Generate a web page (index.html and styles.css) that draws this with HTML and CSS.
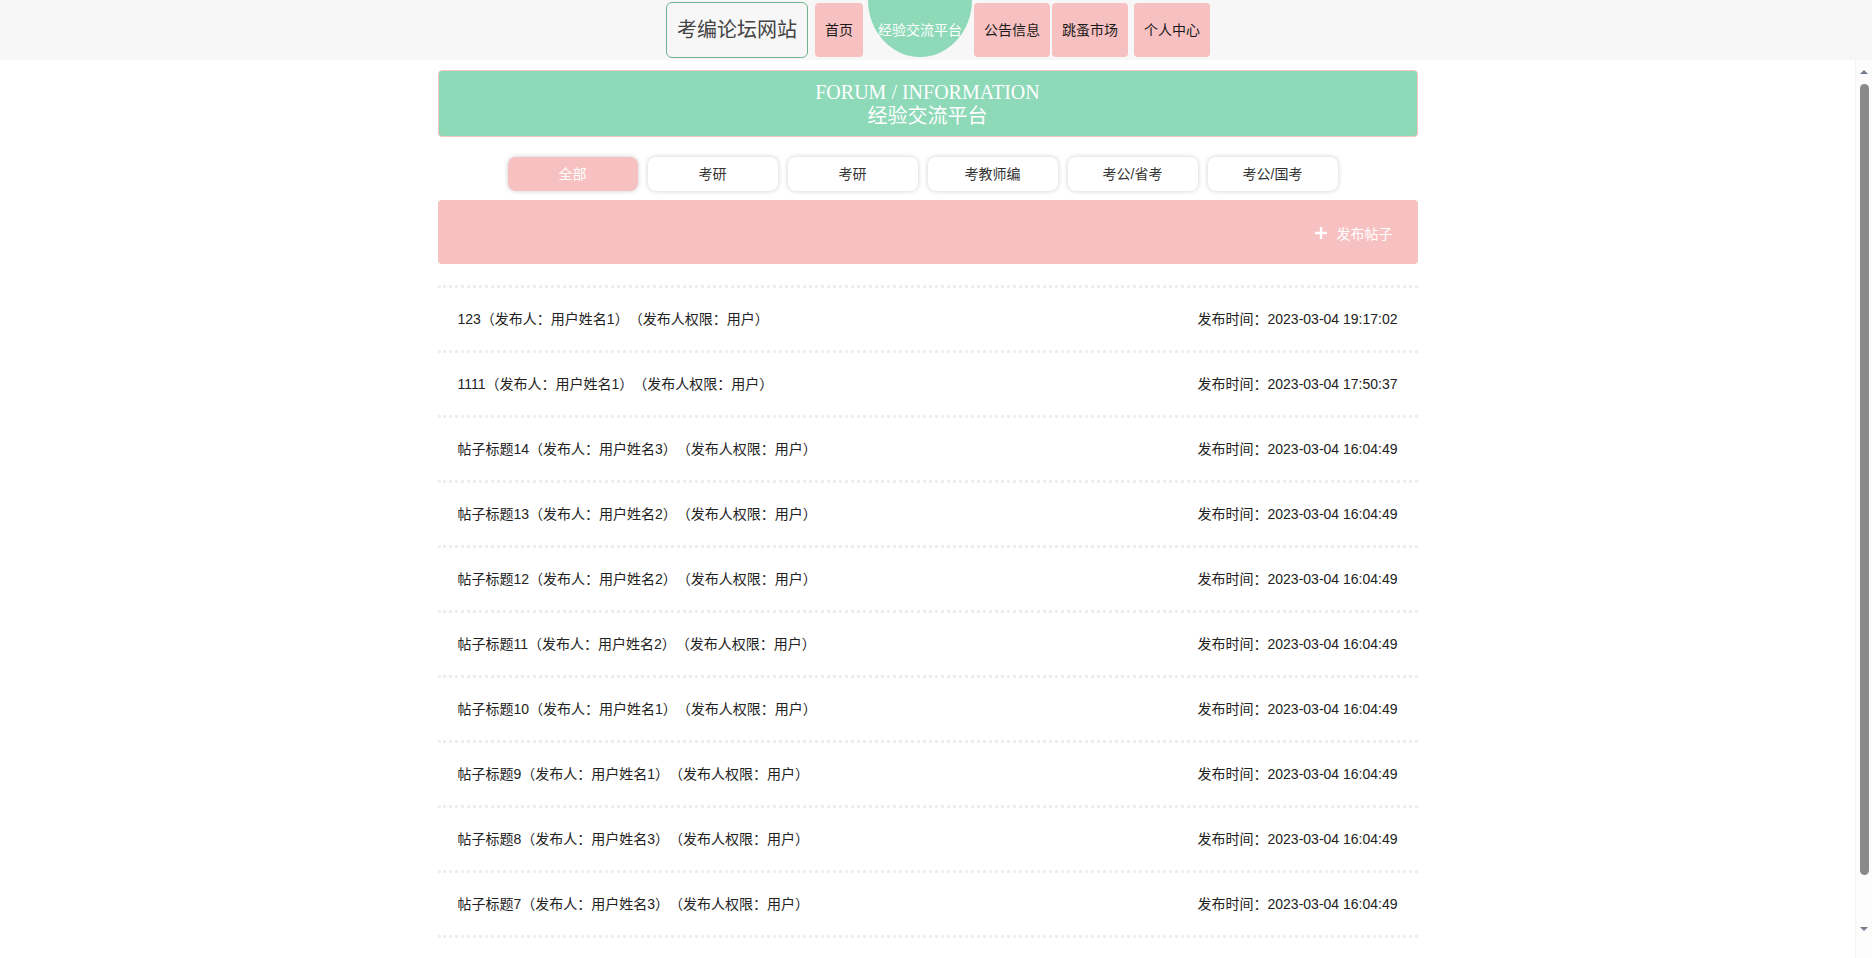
FILE: index.html
```html
<!DOCTYPE html>
<html lang="zh-CN">
<head>
<meta charset="utf-8">
<title>经验交流平台</title>
<link rel="stylesheet" href="styles.css">
</head>
<body>
<div class="page">
  <header class="topbar">
    <nav class="nav">
      <div class="logo">考编论坛网站</div>
      <a class="nav-item nav-home">首页</a>
      <a class="nav-item nav-active">经验交流平台</a>
      <a class="nav-item">公告信息</a>
      <a class="nav-item nav-market">跳蚤市场</a>
      <a class="nav-item">个人中心</a>
    </nav>
  </header>
  <div class="body-row">
    <main class="main">
      <div class="container">
        <div class="banner">
          <div class="banner-en">FORUM / INFORMATION</div>
          <div class="banner-cn">经验交流平台</div>
        </div>
        <div class="tabs">
          <div class="tab tab-active">全部</div>
          <div class="tab">考研</div>
          <div class="tab">考研</div>
          <div class="tab">考教师编</div>
          <div class="tab">考公/省考</div>
          <div class="tab">考公/国考</div>
        </div>
        <div class="action-bar">
          <div class="publish">
            <svg class="plus" width="12" height="12" viewBox="0 0 12 12"><rect x="4.8" y="0" width="2.4" height="12" fill="#fff"/><rect x="0" y="4.8" width="12" height="2.4" fill="#fff"/></svg>
            <span>发布帖子</span>
          </div>
        </div>
        <ul class="list">
          <li class="row"><span class="title">123（发布人：用户姓名1）（发布人权限：用户）</span><span class="time">发布时间：2023-03-04 19:17:02</span></li>
          <li class="row"><span class="title">1111（发布人：用户姓名1）（发布人权限：用户）</span><span class="time">发布时间：2023-03-04 17:50:37</span></li>
          <li class="row"><span class="title">帖子标题14（发布人：用户姓名3）（发布人权限：用户）</span><span class="time">发布时间：2023-03-04 16:04:49</span></li>
          <li class="row"><span class="title">帖子标题13（发布人：用户姓名2）（发布人权限：用户）</span><span class="time">发布时间：2023-03-04 16:04:49</span></li>
          <li class="row"><span class="title">帖子标题12（发布人：用户姓名2）（发布人权限：用户）</span><span class="time">发布时间：2023-03-04 16:04:49</span></li>
          <li class="row"><span class="title">帖子标题11（发布人：用户姓名2）（发布人权限：用户）</span><span class="time">发布时间：2023-03-04 16:04:49</span></li>
          <li class="row"><span class="title">帖子标题10（发布人：用户姓名1）（发布人权限：用户）</span><span class="time">发布时间：2023-03-04 16:04:49</span></li>
          <li class="row"><span class="title">帖子标题9（发布人：用户姓名1）（发布人权限：用户）</span><span class="time">发布时间：2023-03-04 16:04:49</span></li>
          <li class="row"><span class="title">帖子标题8（发布人：用户姓名3）（发布人权限：用户）</span><span class="time">发布时间：2023-03-04 16:04:49</span></li>
          <li class="row"><span class="title">帖子标题7（发布人：用户姓名3）（发布人权限：用户）</span><span class="time">发布时间：2023-03-04 16:04:49</span></li>
        </ul>
      </div>
    </main>
    <div class="rail" aria-hidden="true">
      <span class="arrow arrow-up"></span>
      <span class="thumb"></span>
      <span class="arrow arrow-down"></span>
    </div>
  </div>
</div>
</body>
</html>
```
FILE: styles.css
```css
* { box-sizing: border-box; }
html, body { margin: 0; padding: 0; height: 100%; }
body {
  font-family: "Liberation Sans", "Noto Sans CJK SC", sans-serif;
  font-size: 14px;
  color: #333;
  background: #fff;
  text-spacing-trim: space-all;
  overflow: hidden;
}
.page {
  display: flex;
  flex-direction: column;
  height: 100vh;
}
.topbar {
  flex: none;
  height: 60px;
  background: #f7f7f7;
  display: flex;
  justify-content: center;
  padding-left: 6px;
}
.nav {
  display: flex;
  align-items: flex-start;
}
.logo {
  margin-top: 2px;
  height: 56px;
  padding: 0 10px;
  border: 1px solid #6db28f;
  border-radius: 6px;
  font-size: 20px;
  line-height: 54px;
  color: #444;
  margin-right: 7px;
}
.nav-item {
  margin-top: 3px;
  height: 54px;
  line-height: 54px;
  padding: 0 10px;
  background: #f7c1c1;
  border-radius: 4px;
  color: #1a1a1a;
  font-size: 14px;
  margin-right: 2px;
}
.nav-home { margin-right: 5px; }
.nav-market { margin-right: 6px; }
.nav-active {
  margin-top: 0;
  height: 57px;
  line-height: 60px;
  background: #8dd9b8;
  color: #fff;
  width: 104px;
  text-align: center;
  padding: 0;
  border-radius: 0 0 50% 50% / 0 0 100% 100%;
}
.body-row {
  flex: 1;
  display: flex;
  min-height: 0;
}
.main {
  flex: 1;
  overflow-y: auto;
  scrollbar-width: none;
}
.rail {
  flex: none;
  width: 17px;
  background: #fcfcfc;
  border-left: 1px solid #f2f2f2;
  display: flex;
  flex-direction: column;
  align-items: center;
  padding: 10px 0 27px;
}
.arrow {
  width: 0;
  height: 0;
  border-left: 4px solid transparent;
  border-right: 4px solid transparent;
}
.arrow-up {
  border-bottom: 4px solid #707c8a;
}
.arrow-down {
  margin-top: auto;
  border-top: 4px solid #707c8a;
}
.thumb {
  margin-top: 10px;
  width: 9px;
  height: 791px;
  background: #8a8a8a;
  border-radius: 5px;
}
.container {
  width: 980px;
  margin: 0 auto;
  padding: 10px 0 87px;
}
.banner {
  height: 67px;
  background: #8dd9b8;
  border: 1px solid #f5c6c0;
  border-radius: 4px;
  display: flex;
  flex-direction: column;
  justify-content: center;
  align-items: center;
  color: #fff;
  font-family: "Liberation Serif", "Noto Sans CJK SC", serif;
  font-size: 20px;
  line-height: 24px;
}
.tabs {
  display: flex;
  justify-content: center;
  margin-top: 20px;
}
.tab {
  width: 130px;
  height: 34px;
  line-height: 34px;
  margin-right: 10px;
  text-align: center;
  background: #fff;
  border-radius: 8px;
  box-shadow: 0 0 5px rgba(0,0,0,0.2);
  color: #333;
  font-size: 14px;
}
.tab-active {
  background: #f7c1c1;
  color: #fff;
}
.action-bar {
  margin-top: 9px;
  height: 64px;
  background: #f7c1c1;
  border-radius: 4px;
  display: flex;
  justify-content: flex-end;
  align-items: center;
  padding-right: 25px;
}
.publish {
  display: flex;
  align-items: center;
  gap: 10px;
  color: #fff;
  font-size: 14px;
  padding-top: 2px;
}
.list {
  list-style: none;
  margin: 21px 0 0;
  padding: 0;
}
.row {
  display: flex;
  justify-content: space-between;
  padding: 20px 20px;
  line-height: 22px;
  border-top: 3px dotted #eee;
  color: #222;
}
.row:last-child {
  border-bottom: 3px dotted #eee;
}
```
